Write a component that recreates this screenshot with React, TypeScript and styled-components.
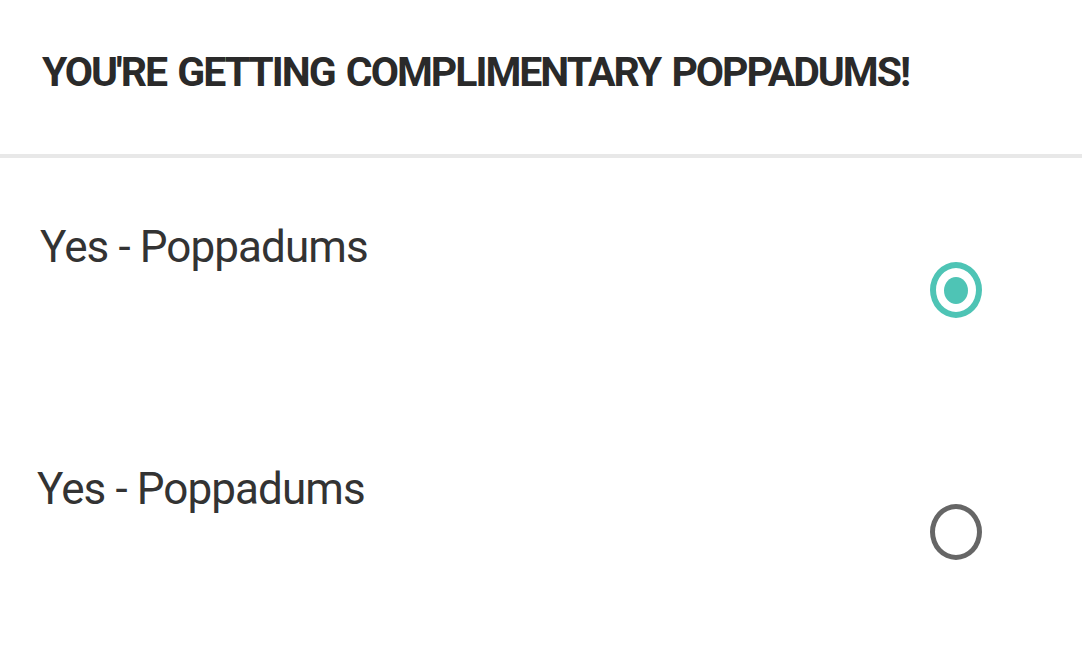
import React, { useState } from "react";
import styled, { createGlobalStyle } from "styled-components";

const Global = createGlobalStyle`
  html, body { margin: 0; padding: 0; background: #ffffff; }
  body { font-family: Roboto, "Noto Sans", sans-serif; }
`;

const Page = styled.div`
  width: 1082px;
  height: 656px;
  background: #fff;
  overflow: hidden;
`;

const Header = styled.header`
  height: 158px;
  box-sizing: border-box;
  padding: 44px 0 0 42px;
  border-bottom: 4px solid #e8e8e8;
`;

const Title = styled.h1`
  margin: 0;
  font-family: Roboto, sans-serif;
  font-weight: 700;
  font-size: 41px;
  letter-spacing: -2px;
  word-spacing: 3px;
  line-height: 56px;
  white-space: nowrap;
  color: #2a2a2a;
`;

const List = styled.div`
  display: flex;
  flex-direction: column;
`;

const Row = styled.label<{ $indent: number }>`
  height: 242px;
  display: flex;
  justify-content: space-between;
  align-items: flex-start;
  box-sizing: border-box;
  padding: 59px 100px 0 ${(p) => p.$indent}px;
  cursor: pointer;
`;

const Label = styled.span`
  font-family: Roboto, sans-serif;
  font-size: 44px;
  letter-spacing: -0.9px;
  line-height: 60px;
  color: #333;
`;

const Radio = styled.span<{ $checked: boolean }>`
  width: 52px;
  height: 56px;
  margin-top: 45px;
  box-sizing: border-box;
  border-radius: 50%;
  border: ${(p) => (p.$checked ? "6px solid #4ec4b5" : "5px solid #666")};
  display: flex;
  align-items: center;
  justify-content: center;
  &::after {
    content: "";
    width: 24px;
    height: 27px;
    border-radius: 50%;
    background: #4ec4b5;
    display: ${(p) => (p.$checked ? "block" : "none")};
  }
`;

export default function App() {
  const [sel, setSel] = useState(0);
  const options = [
    { label: "Yes - Poppadums", indent: 40 },
    { label: "Yes - Poppadums", indent: 37 },
  ];
  return (
    <Page>
      <Global />
      <Header>
        <Title>YOU'RE GETTING COMPLIMENTARY POPPADUMS!</Title>
      </Header>
      <List>
        {options.map((o, i) => (
          <Row key={i} $indent={o.indent} onClick={() => setSel(i)}>
            <Label>{o.label}</Label>
            <Radio $checked={sel === i} />
          </Row>
        ))}
      </List>
    </Page>
  );
}
